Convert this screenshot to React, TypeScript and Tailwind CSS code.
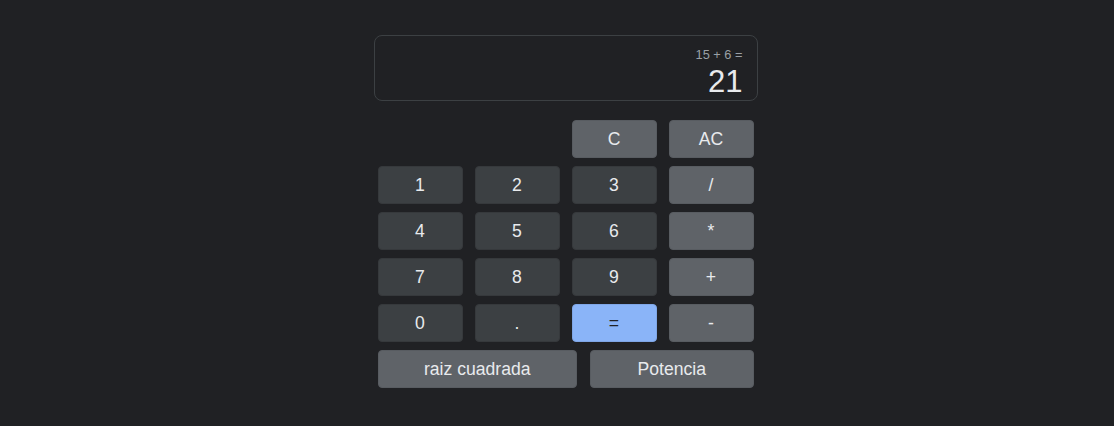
const Key: React.FC<{
  label: string;
  variant?: 'num' | 'op' | 'eq';
  className?: string;
}> = ({ label, variant = 'num', className = '' }) => {
  const colors =
    variant === 'eq'
      ? 'bg-[#8ab4f8] text-[#202124] border-[#7fa6e6]'
      : variant === 'op'
        ? 'bg-[#5f6368] text-[#e8eaed] border-[#585c61]'
        : 'bg-[#3c4043] text-[#e8eaed] border-[#36393c]';
  return (
    <button
      className={'h-[38px] rounded-[4px] border text-[17.6px] flex items-center justify-center ' + colors + ' ' + className}
    >
      {label}
    </button>
  );
};

export default function App() {
  const rows: [string, 'num' | 'op' | 'eq'][][] = [
    [['1', 'num'], ['2', 'num'], ['3', 'num'], ['/', 'op']],
    [['4', 'num'], ['5', 'num'], ['6', 'num'], ['*', 'op']],
    [['7', 'num'], ['8', 'num'], ['9', 'num'], ['+', 'op']],
    [['0', 'num'], ['.', 'num'], ['=', 'eq'], ['-', 'op']],
  ];
  return (
    <div
      className="w-full h-[426px] bg-[#202124] flex justify-center pl-[17px] pt-[35px]"
      style={{ fontFamily: '"Liberation Sans", Arial, sans-serif' }}
    >
      <div className="w-[384px] flex flex-col">
        <div className="h-[66px] rounded-[8px] border border-[#3c4043] flex flex-col items-end justify-end pr-[14px] pb-[1px]">
          <div className="text-[12.8px] text-[#9aa0a6] leading-none mb-[2px]">15 + 6 =</div>
          <div className="text-[31px] text-[#e8eaed] leading-[35px]">21</div>
        </div>
        <div className="px-1 pt-[19px] flex flex-col gap-[8px]">
          <div className="grid grid-cols-[85px_85px_85px_85px] gap-x-[12px]">
            <div />
            <div />
            <Key label="C" variant="op" />
            <Key label="AC" variant="op" />
          </div>
          {rows.map((row, i) => (
            <div key={i} className="grid grid-cols-[85px_85px_85px_85px] gap-x-[12px]">
              {row.map(([l, v]) => (
                <Key key={l} label={l} variant={v} />
              ))}
            </div>
          ))}
          <div className="flex gap-[13px]">
            <Key label="raiz cuadrada" variant="op" className="w-[200px]" />
            <Key label="Potencia" variant="op" className="w-[164px]" />
          </div>
        </div>
      </div>
    </div>
  );
}
